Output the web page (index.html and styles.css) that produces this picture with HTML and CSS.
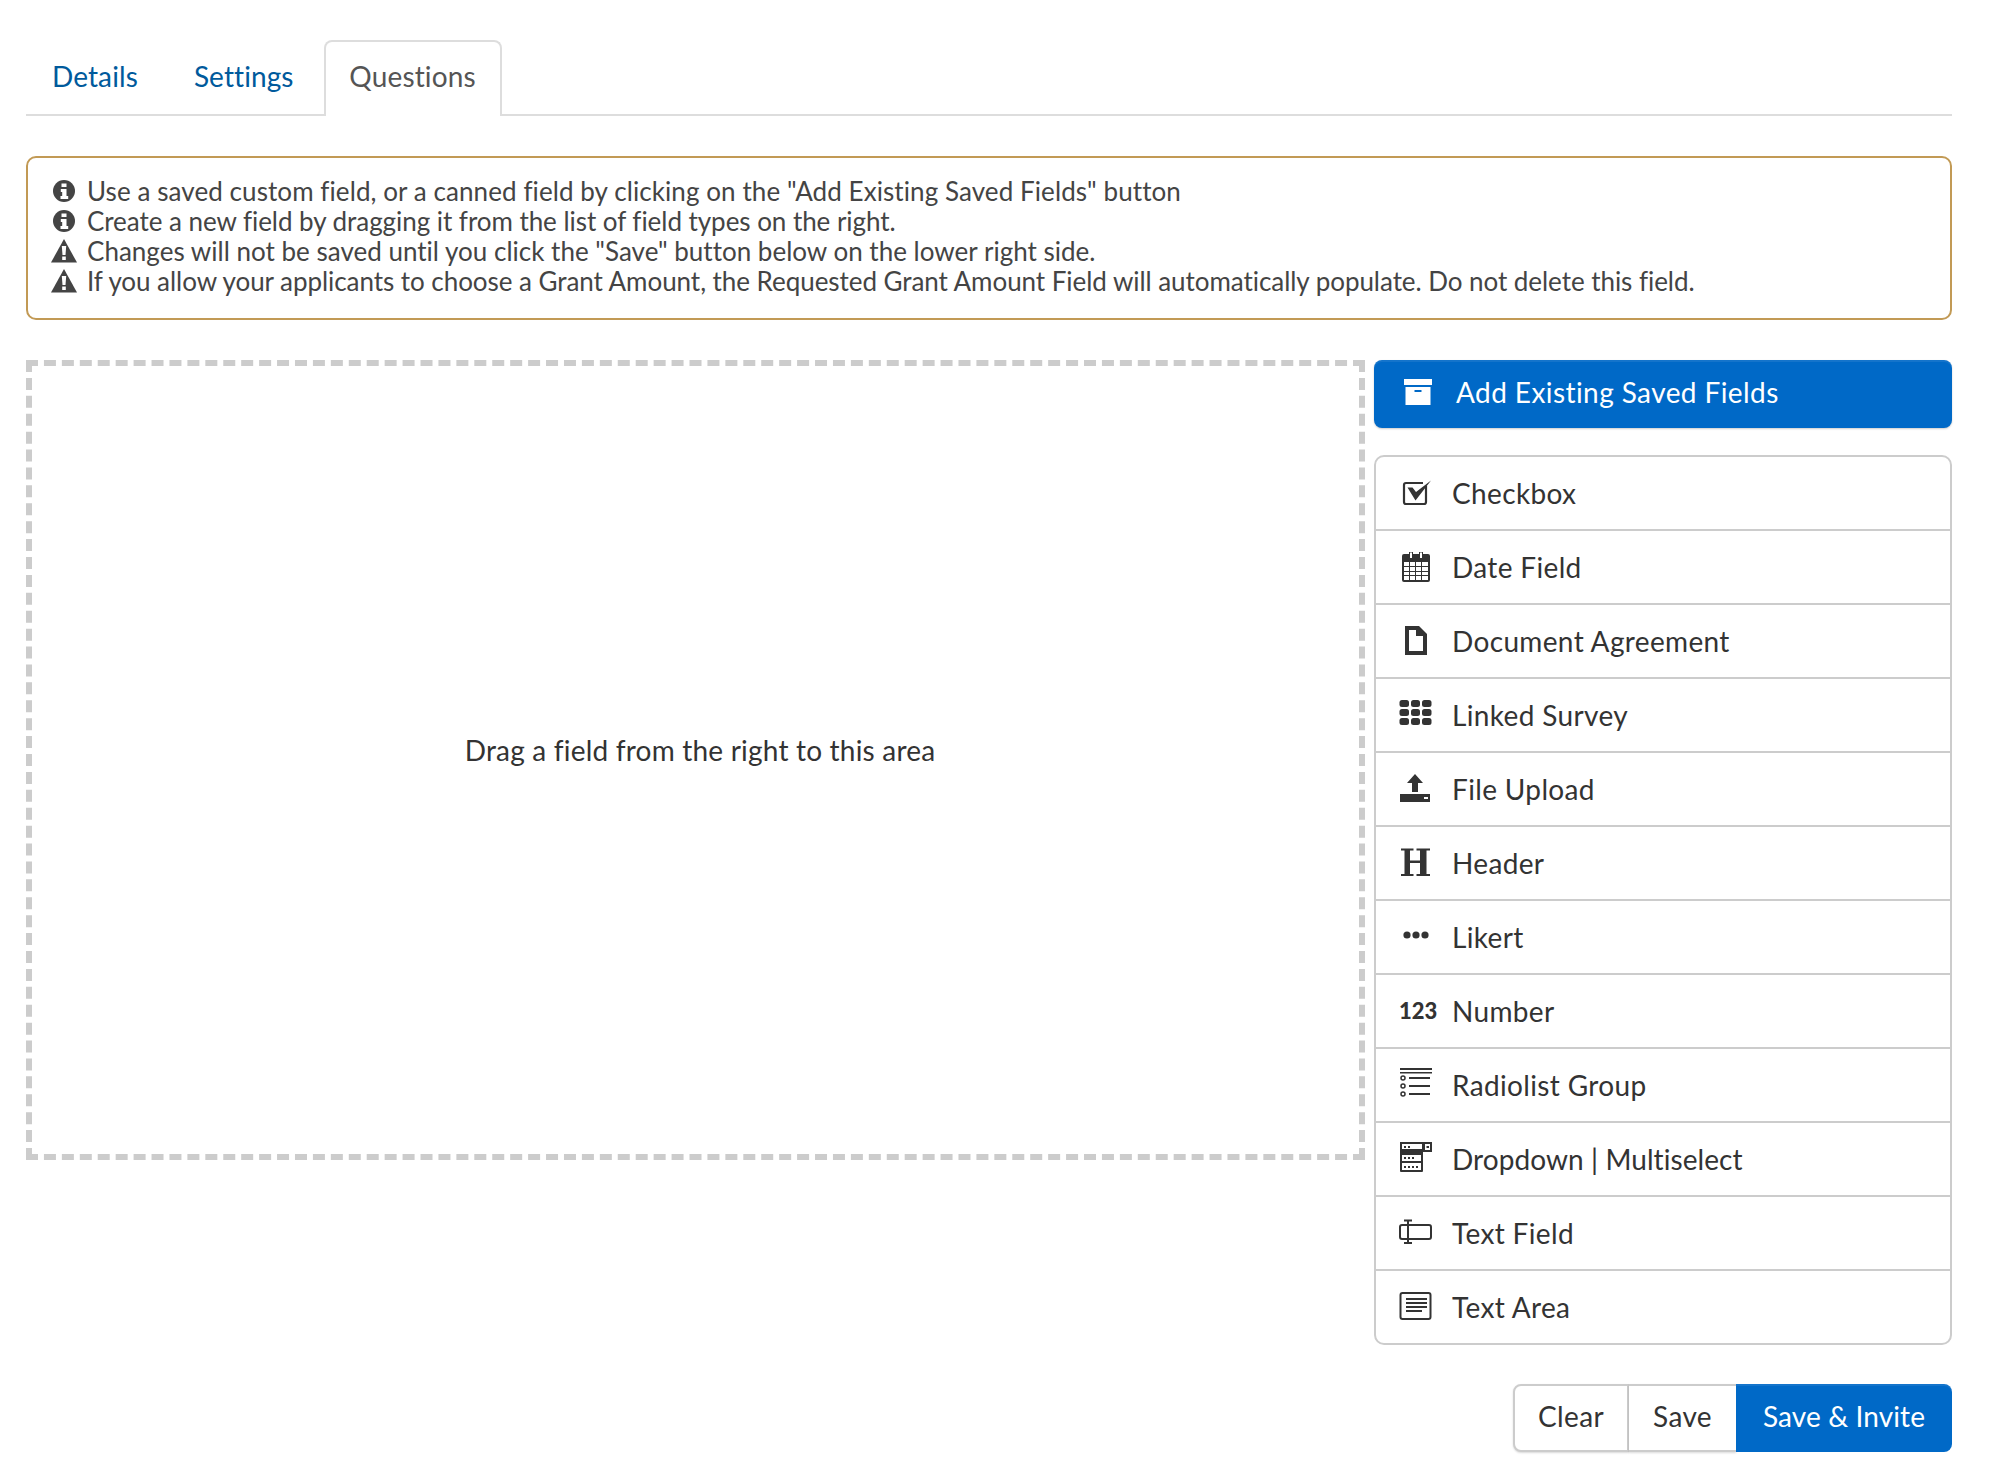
FILE: index.html
```html
<!DOCTYPE html>
<html lang="en">
<head>
<meta charset="utf-8">
<title>Questions</title>
<link rel="stylesheet" href="styles.css">
</head>
<body>
<main class="page">
  <nav class="tabs">
    <a class="tab">Details</a>
    <a class="tab">Settings</a>
    <a class="tab active">Questions</a>
  </nav>
  <section class="alert">
    <p class="alert-line"><svg class="alert-icon" viewBox="0 0 26 26"><circle cx="13" cy="13" r="11"/><path class="cut" d="M10.5 5.5h5v3.5h-5zM9.8 11h5.7v7h1.7v3H9.5v-3h1.7v-4H9.8z"/></svg><span>Use a saved custom field, or a canned field by clicking on the "Add Existing Saved Fields" button</span></p>
    <p class="alert-line"><svg class="alert-icon" viewBox="0 0 26 26"><circle cx="13" cy="13" r="11"/><path class="cut" d="M10.5 5.5h5v3.5h-5zM9.8 11h5.7v7h1.7v3H9.5v-3h1.7v-4H9.8z"/></svg><span>Create a new field by dragging it from the list of field types on the right.</span></p>
    <p class="alert-line"><svg class="alert-icon" viewBox="0 0 26 26"><path d="M13 1 26 24.500H0z"/><path class="cut" d="M10.800 8h4.400l-.7 9h-3zM11.200 18.500h3.600v3.500h-3.600z"/></svg><span>Changes will not be saved until you click the "Save" button below on the lower right side.</span></p>
    <p class="alert-line"><svg class="alert-icon" viewBox="0 0 26 26"><path d="M13 1 26 24.500H0z"/><path class="cut" d="M10.800 8h4.400l-.7 9h-3zM11.200 18.500h3.600v3.500h-3.600z"/></svg><span>If you allow your applicants to choose a Grant Amount, the Requested Grant Amount Field will automatically populate. Do not delete this field.</span></p>
  </section>
  <div class="builder">
    <div class="dropzone">Drag a field from the right to this area</div>
    <aside class="side">
      <button class="add-btn"><svg class="add-icon" viewBox="0 0 28 26"><path fill="#fff" d="M0 0h28v6H0zM1.500 8h25v18h-25z"/><path fill="#0069c7" d="M10.500 11h7v2h-7z"/></svg><span>Add Existing Saved Fields</span></button>
      <ul class="fields">
        <li class="field"><svg class="ficon" viewBox="0 0 32 32"><path fill="none" stroke="#333" stroke-width="2.200" d="M27 9v16a2 2 0 0 1-2 2H7a2 2 0 0 1-2-2V8a2 2 0 0 1 2-2h17"/><path d="M8.500 10.500h5l3.500 4.500L32 3.500 16.500 23.500z"/></svg>Checkbox</li>
        <li class="field"><svg class="ficon" viewBox="0 0 32 32"><path d="M5 3h5V1h4v2h6V1h4v2h5a2 2 0 0 1 2 2v24a2 2 0 0 1-2 2H5a2 2 0 0 1-2-2V5a2 2 0 0 1 2-2z"/><path fill="#fff" d="M5 11h5v4H5zM11 11h5v4h-5zM17 11h5v4h-5zM23 11h6v4h-6zM5 16h5v4H5zM11 16h5v4h-5zM17 16h5v4h-5zM23 16h6v4h-6zM5 21h5v3H5zM11 21h5v3h-5zM17 21h5v3h-5zM23 21h6v3h-6zM5 25h5v4H5zM11 25h5v4h-5zM17 25h5v4h-5zM23 25h6v4h-6z"/><path fill="#fff" d="M11 1.500h2V7h-2zM21 1.500h2V7h-2z"/></svg>Date Field</li>
        <li class="field"><svg class="ficon" viewBox="0 0 32 32"><path fill-rule="evenodd" d="M6 1h14l8 8v21H6zM10 5v21h14V11h-7V5z"/></svg>Document Agreement</li>
        <li class="field"><svg class="ficon" viewBox="0 2 32 32"><rect x="0.500" y="3" width="9.500" height="7" rx="2.500"/><rect x="12" y="3" width="9" height="7" rx="2.500"/><rect x="23" y="3" width="9.500" height="7" rx="2.500"/><rect x="0.500" y="12" width="9.500" height="7" rx="2.500"/><rect x="12" y="12" width="9" height="7" rx="2.500"/><rect x="23" y="12" width="9.500" height="7" rx="2.500"/><rect x="0.500" y="21" width="9.500" height="7" rx="2.500"/><rect x="12" y="21" width="9" height="7" rx="2.500"/><rect x="23" y="21" width="9.500" height="7" rx="2.500"/></svg>Linked Survey</li>
        <li class="field"><svg class="ficon" viewBox="0 1 32 32"><path d="M16 2l8 9h-5v9h-6v-9H8zM1 22h30v8H1z"/><path fill="#fff" d="M25 25h4v2h-4z"/></svg>File Upload</li>
        <li class="field"><svg class="ficon" viewBox="0 0 32 32"><path d="M2 1.500h12.500v2H11v10h10v-10h-3.500v-2H31v2h-3.500V27H31v2H17.500v-2H21V16H11v11h3.500v2H2v-2h3.500V3.500H2z"/></svg>Header</li>
        <li class="field"><svg class="ficon" viewBox="0 0 32 32"><circle cx="8" cy="14" r="3.600"/><circle cx="17" cy="14" r="3.600"/><circle cx="26" cy="14" r="3.600"/></svg>Likert</li>
        <li class="field"><span class="ficon num">123</span>Number</li>
        <li class="field"><svg class="ficon" viewBox="0 3 32 32"><path d="M1 2h32v2H1zM1 6h32v1.500H1zM10 11h21v2H10zM10 19h21v2H10zM10 27h21v2H10z"/><g fill="none" stroke="#333" stroke-width="1.500"><circle cx="4" cy="12" r="2"/><circle cx="4" cy="20" r="2"/><circle cx="4" cy="28" r="2"/></g></svg>Radiolist Group</li>
        <li class="field tight"><svg class="ficon" viewBox="0 3 32 32"><path d="M1 2h32v10h-9v19a1 1 0 0 1-1 1H2a1 1 0 0 1-1-1z"/><path fill="#fff" d="M3 4h20v5H3zM26 4h5v6h-5zM3 15h19v6H3zM3 23h19v7H3z"/><path d="M5 6h2v2H5zM9 6h2v2H9zM27.500 6h2.500v2h-2.500zM5 17h2v2H5zM9 17h2v2H9zM13 17h2v2h-2zM5 26h2v2H5zM9 26h2v2H9zM13 26h2v2h-2zM17 26h2v2h-2z"/></svg>Dropdown | Multiselect</li>
        <li class="field"><svg class="ficon" viewBox="0 0 32 32"><rect x="1" y="8" width="31" height="14" rx="2" fill="none" stroke="#333" stroke-width="2"/><path fill="none" stroke="#333" stroke-width="2" d="M5 3.500h8M9 3.500v22.500M5 26h8"/></svg>Text Field</li>
        <li class="field"><svg class="ficon" viewBox="0 0 32 32"><rect x="1.500" y="2" width="30" height="26" rx="2" fill="none" stroke="#333" stroke-width="2"/><path d="M7 7h21v2H7zM7 11h21v2H7zM7 15h21v2H7zM7 19h16v2H7z"/></svg>Text Area</li>
      </ul>
    </aside>
  </div>
  <footer class="actions">
    <button class="act first">Clear</button>
    <button class="act second">Save</button>
    <button class="act primary">Save &amp; Invite</button>
  </footer>
</main>
</body>
</html>
```
FILE: styles.css
```css
* { box-sizing: border-box; }
html, body { margin: 0; background: #fff; }
body { font-family: Lato, "Open Sans", sans-serif; color: #333; font-size: 28px; letter-spacing: .35px; font-variant-ligatures: none; }
.page { padding: 40px 48px 0 26px; height: 1476px; overflow: hidden; }
.tabs { display: flex; height: 76px; border-bottom: 2px solid #ddd; letter-spacing: .1px; }
.tab { height: 76px; padding: 0 26px; line-height: 69px; color: #005a9c; border: 2px solid transparent; border-bottom: 0; }
.tab:first-child { padding-left: 24px; }
.tab.active { width: 178px; padding: 0; margin-left: 2px; text-align: center; color: #555; background: #fff; border-color: #ddd; border-radius: 8px 8px 0 0; letter-spacing: .15px; }
.alert { margin-top: 40px; height: 164px; border: 2px solid #c29a55; border-radius: 10px; padding: 18px 23px; }
.alert-line { margin: 0; height: 30px; display: flex; align-items: center; gap: 10px; font-size: 26px; letter-spacing: 0; color: #444; white-space: nowrap; }
.alert-line:nth-child(1) { letter-spacing: .08px; }
.alert-line:nth-child(2) { letter-spacing: -.05px; }
.alert-line:nth-child(3) { letter-spacing: .01px; }
.alert-line:nth-child(4) { letter-spacing: -.05px; }
.alert-icon { width: 26px; height: 26px; fill: #444; flex: none; }
.alert-icon .cut { fill: #fff; }
.builder { margin-top: 40px; display: flex; gap: 9px; align-items: flex-start; }
.dropzone { width: 1339px; height: 800px; border: 6px dashed #ccc; padding: 0 0 20px 9px; letter-spacing: .2px; display: flex; align-items: center; justify-content: center; }
.side { flex: 1; display: flex; flex-direction: column; }
.add-btn { display: flex; align-items: center; gap: 24px; height: 68px; padding: 0 0 5px 30px; border: 0; border-radius: 8px; background: #0069c7; color: #fff; font: inherit; letter-spacing: .42px; box-shadow: inset 0 2px 0 rgba(255,255,255,.08), 0 1px 2px rgba(0,0,0,.2); }
.add-icon { width: 28px; height: 26px; flex: none; }
.fields { list-style: none; margin: 27px 0 0; padding: 0; border: 2px solid #ccc; border-radius: 10px; }
.field { display: flex; align-items: center; gap: 21px; height: 74px; padding-left: 23px; border-bottom: 2px solid #ccc; }
.field:last-child { border-bottom: 0; height: 72px; }
.field.tight { letter-spacing: .08px; }
.ficon { width: 32px; height: 32px; flex: none; fill: #333; overflow: visible; }
.num { font-size: 22px; font-weight: 900; letter-spacing: 0; text-align: center; line-height: 32px; white-space: nowrap; }
.actions { margin-top: 39px; display: flex; justify-content: flex-end; }
.act { height: 68px; padding: 0 0 5px; font: inherit; letter-spacing: inherit; color: #333; background: #fff; border: 2px solid #ccc; box-shadow: 0 1px 2px rgba(0,0,0,.15); }
.first { width: 116px; border-radius: 8px 0 0 8px; }
.second { width: 107px; border-left: 0; border-right: 0; }
.primary { width: 216px; border: 0; letter-spacing: .12px; background: #0069c7; color: #fff; border-radius: 0 8px 8px 0; box-shadow: inset 0 2px 0 rgba(255,255,255,.08); }
```
